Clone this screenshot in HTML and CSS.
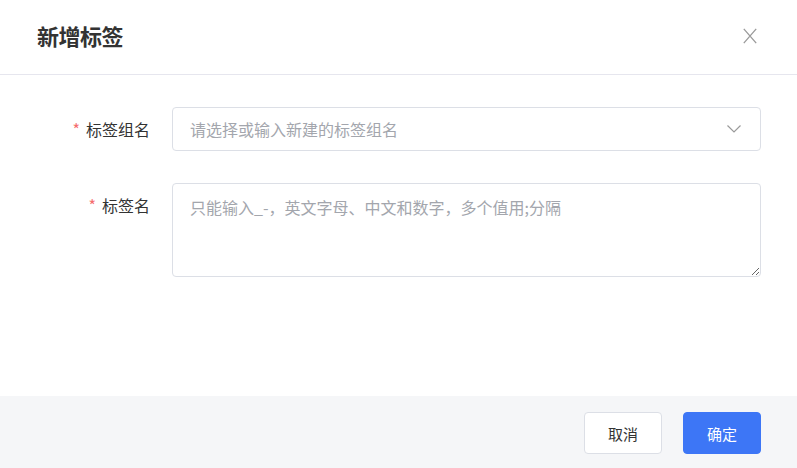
FILE: index.html
```html
<!DOCTYPE html>
<html lang="zh">
<head>
<meta charset="utf-8">
<link rel="stylesheet" href="styles.css">
</head>
<body>
<div class="dialog">
  <div class="dialog-header">
    <h2 class="dialog-title">新增标签</h2>
    <span class="close-btn">
      <svg width="14" height="16" viewBox="0 0 14 16"><path d="M0.8 0.8 L13.2 15.2 M13.2 0.8 L0.8 15.2" stroke="#9a9a9a" stroke-width="1.3" fill="none"/></svg>
    </span>
  </div>
  <div class="dialog-body">
    <div class="form-item">
      <label class="form-label"><span class="req">*</span>标签组名</label>
      <div class="form-control">
        <div class="select">
          <span class="placeholder">请选择或输入新建的标签组名</span>
          <svg class="chevron" width="14" height="8" viewBox="0 0 14 8"><path d="M0.5 0.5 L7 7 L13.5 0.5" stroke="#9a9a9a" stroke-width="1.2" fill="none"/></svg>
        </div>
      </div>
    </div>
    <div class="form-item">
      <label class="form-label"><span class="req">*</span>标签名</label>
      <div class="form-control">
        <textarea class="textarea" placeholder="只能输入_-，英文字母、中文和数字，多个值用;分隔"></textarea>
      </div>
    </div>
  </div>
  <div class="dialog-footer">
    <button class="btn btn-default">取消</button>
    <button class="btn btn-primary">确定</button>
  </div>
</div>
</body>
</html>
```

FILE: styles.css
```css
* { box-sizing: border-box; }
html, body {
  margin: 0;
  padding: 0;
  background: #fff;
  font-family: "Noto Sans CJK SC", "Noto Sans", sans-serif;
}
.dialog {
  width: 797px;
  height: 468px;
  display: flex;
  flex-direction: column;
}
.dialog-header {
  height: 75px;
  flex-shrink: 0;
  border-bottom: 1px solid #e6e6ee;
  display: flex;
  align-items: center;
  justify-content: space-between;
  padding: 0 40px 0 37px;
}
.dialog-title {
  margin: -5px 0 0 0;
  font-size: 22px;
  letter-spacing: -0.5px;
  font-weight: 700;
  color: #333;
  line-height: 1;
}
.close-btn {
  display: flex;
  margin-top: -3px;
}
.dialog-body {
  flex: 1;
  padding: 32px 36px 0 0;
}
.form-item {
  display: flex;
  align-items: flex-start;
  margin-bottom: 32px;
}
.form-label {
  width: 172px;
  height: 44px;
  padding-right: 22px;
  text-align: right;
  font-size: 16px;
  color: #333;
  line-height: 44px;
  flex-shrink: 0;
}
.req {
  color: #f56c6c;
  margin-right: 6px;
}
.form-control { flex: 1; }
.select {
  height: 44px;
  border: 1px solid #dcdfe6;
  border-radius: 4px;
  display: flex;
  align-items: center;
  justify-content: space-between;
  padding: 0 19px 0 17px;
}
.placeholder {
  font-size: 16px;
  color: #a3a6ad;
}
.textarea {
  display: block;
  width: 100%;
  height: 94px;
  border: 1px solid #dcdfe6;
  border-radius: 4px;
  padding: 11px 17px;
  font-family: "Noto Sans CJK SC", "Noto Sans", sans-serif;
  font-size: 16px;
  line-height: 24px;
  resize: vertical;
  outline: none;
}
.textarea::placeholder { color: #a3a6ad; }
.dialog-footer {
  height: 72px;
  flex-shrink: 0;
  background: #f5f6f8;
  display: flex;
  justify-content: flex-end;
  align-items: flex-start;
  gap: 21px;
  padding: 16px 36px 0;
}
.btn {
  width: 78px;
  height: 42px;
  border-radius: 4px;
  font-family: "Noto Sans CJK SC", "Noto Sans", sans-serif;
  font-size: 15px;
  cursor: pointer;
}
.btn-default {
  background: #fff;
  border: 1px solid #dcdfe6;
  color: #333;
}
.btn-primary {
  background: #3d76f6;
  border: 1px solid #3d76f6;
  color: #fff;
}
```
